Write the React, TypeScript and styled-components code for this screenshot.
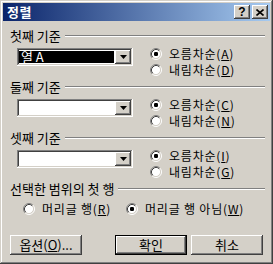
import { FunctionComponent, ReactNode } from 'react';
import styled, { createGlobalStyle } from 'styled-components';

const GlobalStyle = createGlobalStyle`
    html, body {
        margin: 0;
        padding: 0;
        background: #d4d0c8;
    }
    body {
        font-family: "Noto Sans CJK KR", "Liberation Sans", sans-serif;
        font-size: 13px;
        color: #000;
    }
`;

const raised = `
    box-shadow: inset -1px -1px #404040, inset 1px 1px #ffffff,
        inset -2px -2px #808080, inset 2px 2px #d4d0c8;
`;

const sunken = `
    box-shadow: inset -1px -1px #ffffff, inset 1px 1px #808080,
        inset -2px -2px #d4d0c8, inset 2px 2px #404040;
`;

const Window = styled('div')({
    width: '273px',
    height: '264px',
    boxSizing: 'border-box',
    padding: '3px',
    background: '#d4d0c8',
    boxShadow: 'inset -1px -1px #404040, inset 1px 1px #d4d0c8, inset -2px -2px #808080, inset 2px 2px #ffffff',
    display: 'flex',
    flexDirection: 'column',
});

const TitleBar = styled('div')({
    height: '18px',
    display: 'flex',
    alignItems: 'center',
    padding: '0 2px 0 2px',
    background: 'linear-gradient(to right, #0a246a, #a6caf0)',
    color: '#ffffff',
});

const TitleText = styled('span')({
    flex: 1,
    paddingLeft: '2px',
    fontWeight: 700,
    lineHeight: '18px',
    letterSpacing: '0.5px',
});

const TitleButton = styled.div<{ $gap?: number }>`
    width: 16px;
    height: 14px;
    margin-left: ${(p) => p.$gap ?? 0}px;
    background: #d4d0c8;
    ${raised}
    display: flex;
    align-items: center;
    justify-content: center;
    color: #000;
    font-family: "Liberation Sans", sans-serif;
    font-weight: 700;
    font-size: 12px;
    line-height: 14px;
`;

const Body = styled('div')({
    flex: 1,
    display: 'flex',
    flexDirection: 'column',
    padding: '8px 5px 0 7px',
});

const Section = styled('div')({
    display: 'flex',
    flexDirection: 'column',
    marginBottom: '2px',
});

const Header = styled('div')({
    height: '13px',
    display: 'flex',
    alignItems: 'center',
    gap: '4px',
    lineHeight: '13px',
    '&::after': {
        content: '""',
        flex: 1,
        height: '0',
        borderTop: '1px solid #808080',
        borderBottom: '1px solid #ffffff',
    },
});

const SortRow = styled('div')({
    display: 'flex',
    marginTop: '4px',
});

const Combo = styled.div`
    width: 116px;
    height: 18px;
    margin: 2px 0 0 7px;
    box-sizing: border-box;
    padding: 2px;
    background: #ffffff;
    ${sunken}
    display: flex;
`;

const ComboText = styled.div<{ $selected?: boolean }>`
    flex: 1;
    margin: 1px 1px 1px 0;
    padding-left: 2px;
    background: ${(p) => (p.$selected ? '#000000' : 'transparent')};
    color: ${(p) => (p.$selected ? '#ffffff' : '#000000')};
    line-height: 12px;
    font-size: 13px;
`;

const DropButton = styled.div`
    width: 16px;
    height: 14px;
    background: #d4d0c8;
    ${raised}
    display: flex;
    align-items: center;
    justify-content: center;
`;

const RadioColumn = styled('div')({
    display: 'flex',
    flexDirection: 'column',
    marginLeft: '17px',
});

const RadioLabel = styled.div<{ $width?: number; $indent?: number }>`
    height: 16px;
    display: flex;
    align-items: center;
    gap: 7px;
    width: ${(p) => (p.$width ? `${p.$width}px` : 'auto')};
    margin-left: ${(p) => p.$indent ?? 0}px;
    font-size: 12px;
    letter-spacing: 0.8px;
    line-height: 16px;
    white-space: nowrap;
`;

const HeaderRadioRow = styled('div')({
    display: 'flex',
    marginTop: '6px',
});

const ButtonRow = styled('div')({
    display: 'flex',
    marginTop: '16px',
    paddingRight: '2px',
});

const Button = styled.div<{ $default?: boolean; $push?: boolean }>`
    width: 72px;
    height: 20px;
    box-sizing: border-box;
    margin-left: ${(p) => (p.$push ? 'auto' : '0')};
    margin-right: ${(p) => (p.$default ? '4px' : '0')};
    background: #d4d0c8;
    border: ${(p) => (p.$default ? '1px solid #000000' : 'none')};
    ${raised}
    display: flex;
    align-items: center;
    justify-content: center;
    line-height: 18px;
`;

const Radio: FunctionComponent<{ checked?: boolean }> = ({ checked }) => (
    <svg width="12" height="12" viewBox="0 0 12 12" style={{ flex: 'none' }}>
        <circle cx="6" cy="6" r="4.5" fill="#ffffff" />
        <path d="M2.11 9.89 A5.5 5.5 0 0 1 9.89 2.11" fill="none" stroke="#808080" />
        <path d="M9.89 2.11 A5.5 5.5 0 0 1 2.11 9.89" fill="none" stroke="#ffffff" />
        <path d="M2.82 9.18 A4.5 4.5 0 0 1 9.18 2.82" fill="none" stroke="#404040" />
        <path d="M9.18 2.82 A4.5 4.5 0 0 1 2.82 9.18" fill="none" stroke="#d4d0c8" />
        {checked && <rect x="4" y="4" width="4" height="4" rx="1.2" fill="#000000" />}
    </svg>
);

const Arrow = () => (
    <svg width="7" height="4" viewBox="0 0 7 4">
        <polygon points="0,0 7,0 3.5,4" fill="#000000" />
    </svg>
);

const CloseGlyph = () => (
    <svg width="8" height="7" viewBox="0 0 8 7">
        <path d="M0.5 0.5 L7.5 6.5 M7.5 0.5 L0.5 6.5" stroke="#000000" strokeWidth="1.6" />
    </svg>
);

const SortSection: FunctionComponent<{
    title: string;
    value?: string;
    up: ReactNode;
    down: ReactNode;
}> = ({ title, value, up, down }) => (
    <Section>
        <Header>{title}</Header>
        <SortRow>
            <Combo>
                <ComboText $selected={!!value}>{value}</ComboText>
                <DropButton>
                    <Arrow />
                </DropButton>
            </Combo>
            <RadioColumn>
                <RadioLabel>
                    <Radio checked />
                    <span>{up}</span>
                </RadioLabel>
                <RadioLabel>
                    <Radio />
                    <span>{down}</span>
                </RadioLabel>
            </RadioColumn>
        </SortRow>
    </Section>
);

const App: FunctionComponent = () => {
    return (
        <>
            <GlobalStyle />
            <Window>
                <TitleBar>
                    <TitleText>정렬</TitleText>
                    <TitleButton>?</TitleButton>
                    <TitleButton $gap={2}>
                        <CloseGlyph />
                    </TitleButton>
                </TitleBar>
                <Body>
                    <SortSection
                        title="첫째 기준"
                        value="열 A"
                        up={<>오름차순(<u>A</u>)</>}
                        down={<>내림차순(<u>D</u>)</>}
                    />
                    <SortSection
                        title="둘째 기준"
                        up={<>오름차순(<u>C</u>)</>}
                        down={<>내림차순(<u>N</u>)</>}
                    />
                    <SortSection
                        title="셋째 기준"
                        up={<>오름차순(<u>I</u>)</>}
                        down={<>내림차순(<u>G</u>)</>}
                    />
                    <Section>
                        <Header>선택한 범위의 첫 행</Header>
                        <HeaderRadioRow>
                            <RadioLabel $indent={13} $width={103}>
                                <Radio />
                                <span>머리글 행(<u>R</u>)</span>
                            </RadioLabel>
                            <RadioLabel>
                                <Radio checked />
                                <span>머리글 행 아님(<u>W</u>)</span>
                            </RadioLabel>
                        </HeaderRadioRow>
                    </Section>
                    <ButtonRow>
                        <Button>옵션(<u>O</u>)...</Button>
                        <Button $push $default>확인</Button>
                        <Button>취소</Button>
                    </ButtonRow>
                </Body>
            </Window>
        </>
    );
};

export default App;
